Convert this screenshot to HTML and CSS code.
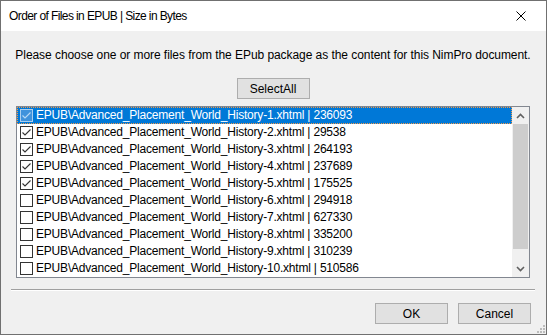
FILE: index.html
```html
<!DOCTYPE html>
<html lang="en">
<head>
    <meta charset="UTF-8" />
    <title>Order of Files in EPUB | Size in Bytes</title>
    <link rel="stylesheet" href="styles.css">
</head>
<body>
    <div class="window">
        <div class="titlebar">
            <span class="title">Order of Files in EPUB | Size in Bytes</span>
            <svg class="close" width="10" height="10" viewBox="0 0 10 10">
                <path d="M0.5 0.5 L9.5 9.5 M9.5 0.5 L0.5 9.5" stroke="#000" stroke-width="1" fill="none"/>
            </svg>
        </div>

        <div class="content">
            <p class="hint">Please choose one or more files from the EPub package as the content for this NimPro document.</p>

            <button type="button" class="btn btn-select">SelectAll</button>

            <div class="listbox">
                <div class="rows">
                    <div class="row selected"><span class="check on"></span>EPUB\Advanced_Placement_World_History-1.xhtml | 236093</div>
                    <div class="row"><span class="check on"></span>EPUB\Advanced_Placement_World_History-2.xhtml | 29538</div>
                    <div class="row"><span class="check on"></span>EPUB\Advanced_Placement_World_History-3.xhtml | 264193</div>
                    <div class="row"><span class="check on"></span>EPUB\Advanced_Placement_World_History-4.xhtml | 237689</div>
                    <div class="row"><span class="check on"></span>EPUB\Advanced_Placement_World_History-5.xhtml | 175525</div>
                    <div class="row"><span class="check"></span>EPUB\Advanced_Placement_World_History-6.xhtml | 294918</div>
                    <div class="row"><span class="check"></span>EPUB\Advanced_Placement_World_History-7.xhtml | 627330</div>
                    <div class="row"><span class="check"></span>EPUB\Advanced_Placement_World_History-8.xhtml | 335200</div>
                    <div class="row"><span class="check"></span>EPUB\Advanced_Placement_World_History-9.xhtml | 310239</div>
                    <div class="row"><span class="check"></span>EPUB\Advanced_Placement_World_History-10.xhtml | 510586</div>
                </div>
                <div class="scrollbar">
                    <div class="arrow">
                        <svg width="9" height="6" viewBox="0 0 9 6"><path d="M1 5 L4.5 1.5 L8 5" stroke="#606060" stroke-width="1.6" fill="none"/></svg>
                    </div>
                    <div class="thumb"></div>
                    <div class="track"></div>
                    <div class="arrow">
                        <svg width="9" height="6" viewBox="0 0 9 6"><path d="M1 1 L4.5 4.5 L8 1" stroke="#606060" stroke-width="1.6" fill="none"/></svg>
                    </div>
                </div>
            </div>

            <div class="separator"></div>

            <div class="actions">
                <button type="button" class="btn">OK</button>
                <button type="button" class="btn">Cancel</button>
            </div>
        </div>

        <svg class="grip" width="9" height="9" viewBox="0 0 9 9">
            <rect x="7" y="1" width="2" height="2" fill="#bcbcbc"/>
            <rect x="4" y="4" width="2" height="2" fill="#bcbcbc"/>
            <rect x="7" y="4" width="2" height="2" fill="#bcbcbc"/>
            <rect x="1" y="7" width="2" height="2" fill="#bcbcbc"/>
            <rect x="4" y="7" width="2" height="2" fill="#bcbcbc"/>
            <rect x="7" y="7" width="2" height="2" fill="#bcbcbc"/>
        </svg>
    </div>
</body>
</html>
```

FILE: styles.css
```css
body {
    margin: 0;
    font-family: "Liberation Sans", Arial, sans-serif;
    font-size: 12px;
    color: #000;
}

.window {
    position: relative;
    width: 547px;
    height: 335px;
    box-sizing: border-box;
    border: 1px solid #707070;
    display: flex;
    flex-direction: column;
}

.titlebar {
    height: 30px;
    flex: none;
    background-color: #fff;
    display: flex;
    align-items: center;
    justify-content: space-between;
    padding: 0 20px 0 8px;
}

.title {
    letter-spacing: -0.6px;
}

.content {
    flex: 1;
    background-color: #f0f0f0;
    display: flex;
    flex-direction: column;
    padding: 0 16px 0 15px;
}

.hint {
    margin: 16px -10px 0 -10px;
    line-height: 16px;
    text-align: center;
    white-space: nowrap;
    letter-spacing: -0.06px;
}

.btn {
    width: 73px;
    height: 21px;
    padding: 0;
    font-family: inherit;
    font-size: 12px;
    color: #000;
    background-color: #e1e1e1;
    border: 1px solid #adadad;
    border-radius: 0;
}

.btn-select {
    align-self: center;
    margin-top: 15px;
}

.listbox {
    margin-top: 7px;
    height: 172px;
    flex: none;
    box-sizing: border-box;
    border: 1px solid #828790;
    background-color: #fff;
    display: flex;
}

.rows {
    flex: 1;
}

.row {
    height: 17px;
    line-height: 17px;
    display: flex;
    align-items: center;
    padding-left: 3px;
    white-space: nowrap;
    letter-spacing: -0.2px;
}

.row.selected {
    background-color: #0078d7;
    color: #fff;
    outline: 1px dotted #f39a4a;
    outline-offset: -1px;
}

.check {
    width: 13px;
    height: 13px;
    box-sizing: border-box;
    border: 1px solid #333;
    background-color: #fff;
    margin-right: 3px;
    flex: none;
}

.check.on {
    background: #fff url("data:image/svg+xml,%3Csvg xmlns='http://www.w3.org/2000/svg' width='11' height='11'%3E%3Cpath d='M1.5 5.5 L4 8 L9.5 2.5' stroke='%23333' stroke-width='1.1' fill='none'/%3E%3C/svg%3E") no-repeat center;
}

.selected .check.on {
    background-color: #3f93dc;
    border-color: #a9cff0;
    background-image: url("data:image/svg+xml,%3Csvg xmlns='http://www.w3.org/2000/svg' width='11' height='11'%3E%3Cpath d='M1.5 5.5 L4 8 L9.5 2.5' stroke='%23b9daf5' stroke-width='1.1' fill='none'/%3E%3C/svg%3E");
}

.scrollbar {
    width: 17px;
    flex: none;
    background-color: #f0f0f0;
    display: flex;
    flex-direction: column;
}

.arrow {
    height: 17px;
    flex: none;
    display: flex;
    align-items: center;
    justify-content: center;
}

.thumb {
    height: 125px;
    flex: none;
    margin: 0 1px;
    background-color: #cdcdcd;
}

.track {
    flex: 1;
}

.separator {
    margin: 11px -5px 0 -5px;
    border-top: 1px solid #a0a0a0;
    border-bottom: 1px solid #fff;
}

.actions {
    margin: 12px -1px 0 0;
    display: flex;
    justify-content: flex-end;
    gap: 10px;
}

.grip {
    position: absolute;
    right: 1px;
    bottom: 1px;
}
```
